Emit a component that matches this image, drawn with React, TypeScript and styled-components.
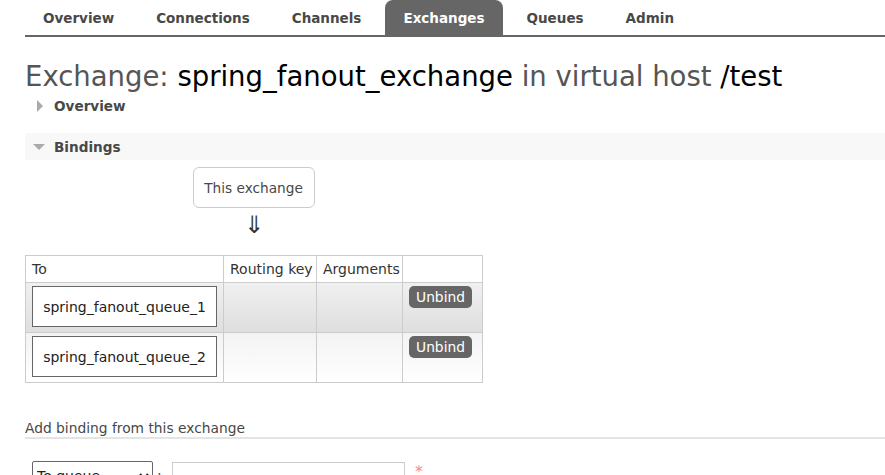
import React from "react";
import styled, { createGlobalStyle } from "styled-components";

const Global = createGlobalStyle`
  html, body { margin: 0; padding: 0; background: #fff; }
  body { font-family: "DejaVu Sans", Verdana, sans-serif; font-size: 13.5px; color: #484848; overflow: hidden; }
`;

const Page = styled.div`
  width: 885px;
  height: 475px;
  overflow: hidden;
  padding-left: 25px;
  box-sizing: border-box;
`;

const Menu = styled.ul`
  display: flex;
  gap: 6px;
  list-style: none;
  margin: 0;
  padding: 0;
  height: 35px;
  border-bottom: 2px solid #666;
  box-sizing: content-box;
`;

const Tab = styled.li<{ $active?: boolean }>`
  display: flex;
  align-items: center;
  padding: 0 18px;
  height: 35px;
  font-weight: bold;
  font-size: 13.5px;
  color: ${(p) => (p.$active ? "#fff" : "#484848")};
  background: ${(p) => (p.$active ? "#666" : "transparent")};
  border-radius: 8px 8px 0 0;
`;

const Title = styled.h1`
  margin: 23px 0 0;
  font-weight: normal;
  font-size: 27.5px;
  line-height: 32px;
  color: #555;
  white-space: nowrap;
`;

const Strong = styled.span`
  color: #000;
`;

const SectionHead = styled.div<{ $shaded?: boolean }>`
  display: flex;
  align-items: center;
  height: 27px;
  padding-left: 8px;
  gap: 8px;
  font-weight: bold;
  font-size: 13.6px;
  color: #484848;
  background: ${(p) => (p.$shaded ? "#f8f8f8" : "transparent")};
`;

const Spacer = styled.div`
  height: 14px;
`;

const Arrow = styled.span<{ $open?: boolean }>`
  display: inline-block;
  width: 0;
  height: 0;
  ${(p) =>
    p.$open
      ? `border-left: 6px solid transparent; border-right: 6px solid transparent; border-top: 6px solid #aaa; margin: 0 1px 0 0;`
      : `border-top: 6px solid transparent; border-bottom: 6px solid transparent; border-left: 6px solid #aaa; margin: 0 3px 0 4px;`}
`;

const Diagram = styled.div`
  display: flex;
  flex-direction: column;
  align-items: center;
  width: 458px;
  margin-top: 7px;
`;

const ExchangeBox = styled.div`
  width: 122px;
  height: 41px;
  box-sizing: border-box;
  border: 1px solid #ccc;
  border-radius: 6px;
  display: flex;
  align-items: center;
  justify-content: center;
  font-size: 13.7px;
  color: #484848;
  margin-left: -1px;
`;

const DownArrow = styled.div`
  font-size: 24px;
  line-height: 24px;
  height: 24px;
  margin-top: 5px;
  color: #333;
`;

const Table = styled.table`
  border-collapse: collapse;
  table-layout: fixed;
  width: 457px;
  margin-top: 18px;
  font-size: 14px;
  color: #333;
`;

const Col = styled.col<{ $w: number }>`
  width: ${(p) => p.$w}px;
`;

const Th = styled.th`
  height: 27px;
  box-sizing: border-box;
  border: 1px solid #ccc;
  font-weight: normal;
  text-align: left;
  padding: 0 0 0 6px;
  white-space: nowrap;
  overflow: hidden;
  background: #fff;
`;

const Row = styled.tr<{ $alt?: boolean }>`
  height: 50px;
  background: ${(p) =>
    p.$alt
      ? "linear-gradient(#f3f3f3, #fff)"
      : "linear-gradient(#f0f0f0, #dedede)"};
`;

const Td = styled.td`
  border: 1px solid #ccc;
  vertical-align: top;
  padding: 3px 6px;
`;

const QueueBox = styled.div`
  width: 185px;
  height: 41px;
  box-sizing: border-box;
  border: 1px solid #666;
  background: #fff;
  display: flex;
  align-items: center;
  justify-content: center;
  font-size: 14px;
  color: #222;
`;

const Button = styled.button`
  font-family: inherit;
  font-size: 13.8px;
  color: #fff;
  background: #666;
  border: none;
  border-radius: 5px;
  height: 22px;
  width: 63px;
  padding: 0;
  margin-top: 0;
`;

const SubHead = styled.h3`
  margin: 37px 0 0;
  font-weight: normal;
  font-size: 13.8px;
  color: #484848;
  padding-bottom: 0;
  border-bottom: 2px solid #e4e4e4;
  line-height: 17px;
`;

const FormRow = styled.div`
  display: flex;
  align-items: flex-start;
  padding: 22px 0 0 7px;
`;

const Select = styled.select`
  width: 121px;
  height: 30px;
  font-family: inherit;
  font-size: 14px;
  border: 1px solid #666;
  border-radius: 2px;
  background: #fff;
  color: #222;
`;

const Colon = styled.span`
  padding: 6px 0 0 4px;
  width: 15px;
  font-size: 14px;
`;

const Input = styled.input`
  width: 233px;
  height: 30px;
  box-sizing: border-box;
  border: 1px solid #ccc;
  margin-top: 1px;
`;

const Req = styled.span`
  color: #f88;
  font-size: 16px;
  line-height: 16px;
  margin: 3px 0 0 10px;
`;

export default function App() {
  const tabs = ["Overview", "Connections", "Channels", "Exchanges", "Queues", "Admin"];
  return (
    <>
      <Global />
      <Page>
        <Menu>
          {tabs.map((t) => (
            <Tab key={t} $active={t === "Exchanges"}>
              {t}
            </Tab>
          ))}
        </Menu>
        <Title>
          Exchange: <Strong>spring_fanout_exchange</Strong> in virtual host <Strong>/test</Strong>
        </Title>
        <SectionHead>
          <Arrow />
          Overview
        </SectionHead>
        <Spacer />
        <SectionHead $shaded>
          <Arrow $open />
          Bindings
        </SectionHead>
        <Diagram>
          <ExchangeBox>This exchange</ExchangeBox>
          <DownArrow>⇓</DownArrow>
        </Diagram>
        <Table>
          <colgroup>
            <Col $w={198} />
            <Col $w={93} />
            <Col $w={86} />
            <Col $w={80} />
          </colgroup>
          <thead>
            <tr>
              <Th>To</Th>
              <Th>Routing key</Th>
              <Th>Arguments</Th>
              <Th></Th>
            </tr>
          </thead>
          <tbody>
            {["spring_fanout_queue_1", "spring_fanout_queue_2"].map((q, i) => (
              <Row key={q} $alt={i === 1}>
                <Td>
                  <QueueBox>{q}</QueueBox>
                </Td>
                <Td />
                <Td />
                <Td>
                  <Button>Unbind</Button>
                </Td>
              </Row>
            ))}
          </tbody>
        </Table>
        <SubHead>Add binding from this exchange</SubHead>
        <FormRow>
          <Select defaultValue="q">
            <option value="q">To queue</option>
            <option value="e">To exchange</option>
          </Select>
          <Colon>:</Colon>
          <Input />
          <Req>*</Req>
        </FormRow>
      </Page>
    </>
  );
}
